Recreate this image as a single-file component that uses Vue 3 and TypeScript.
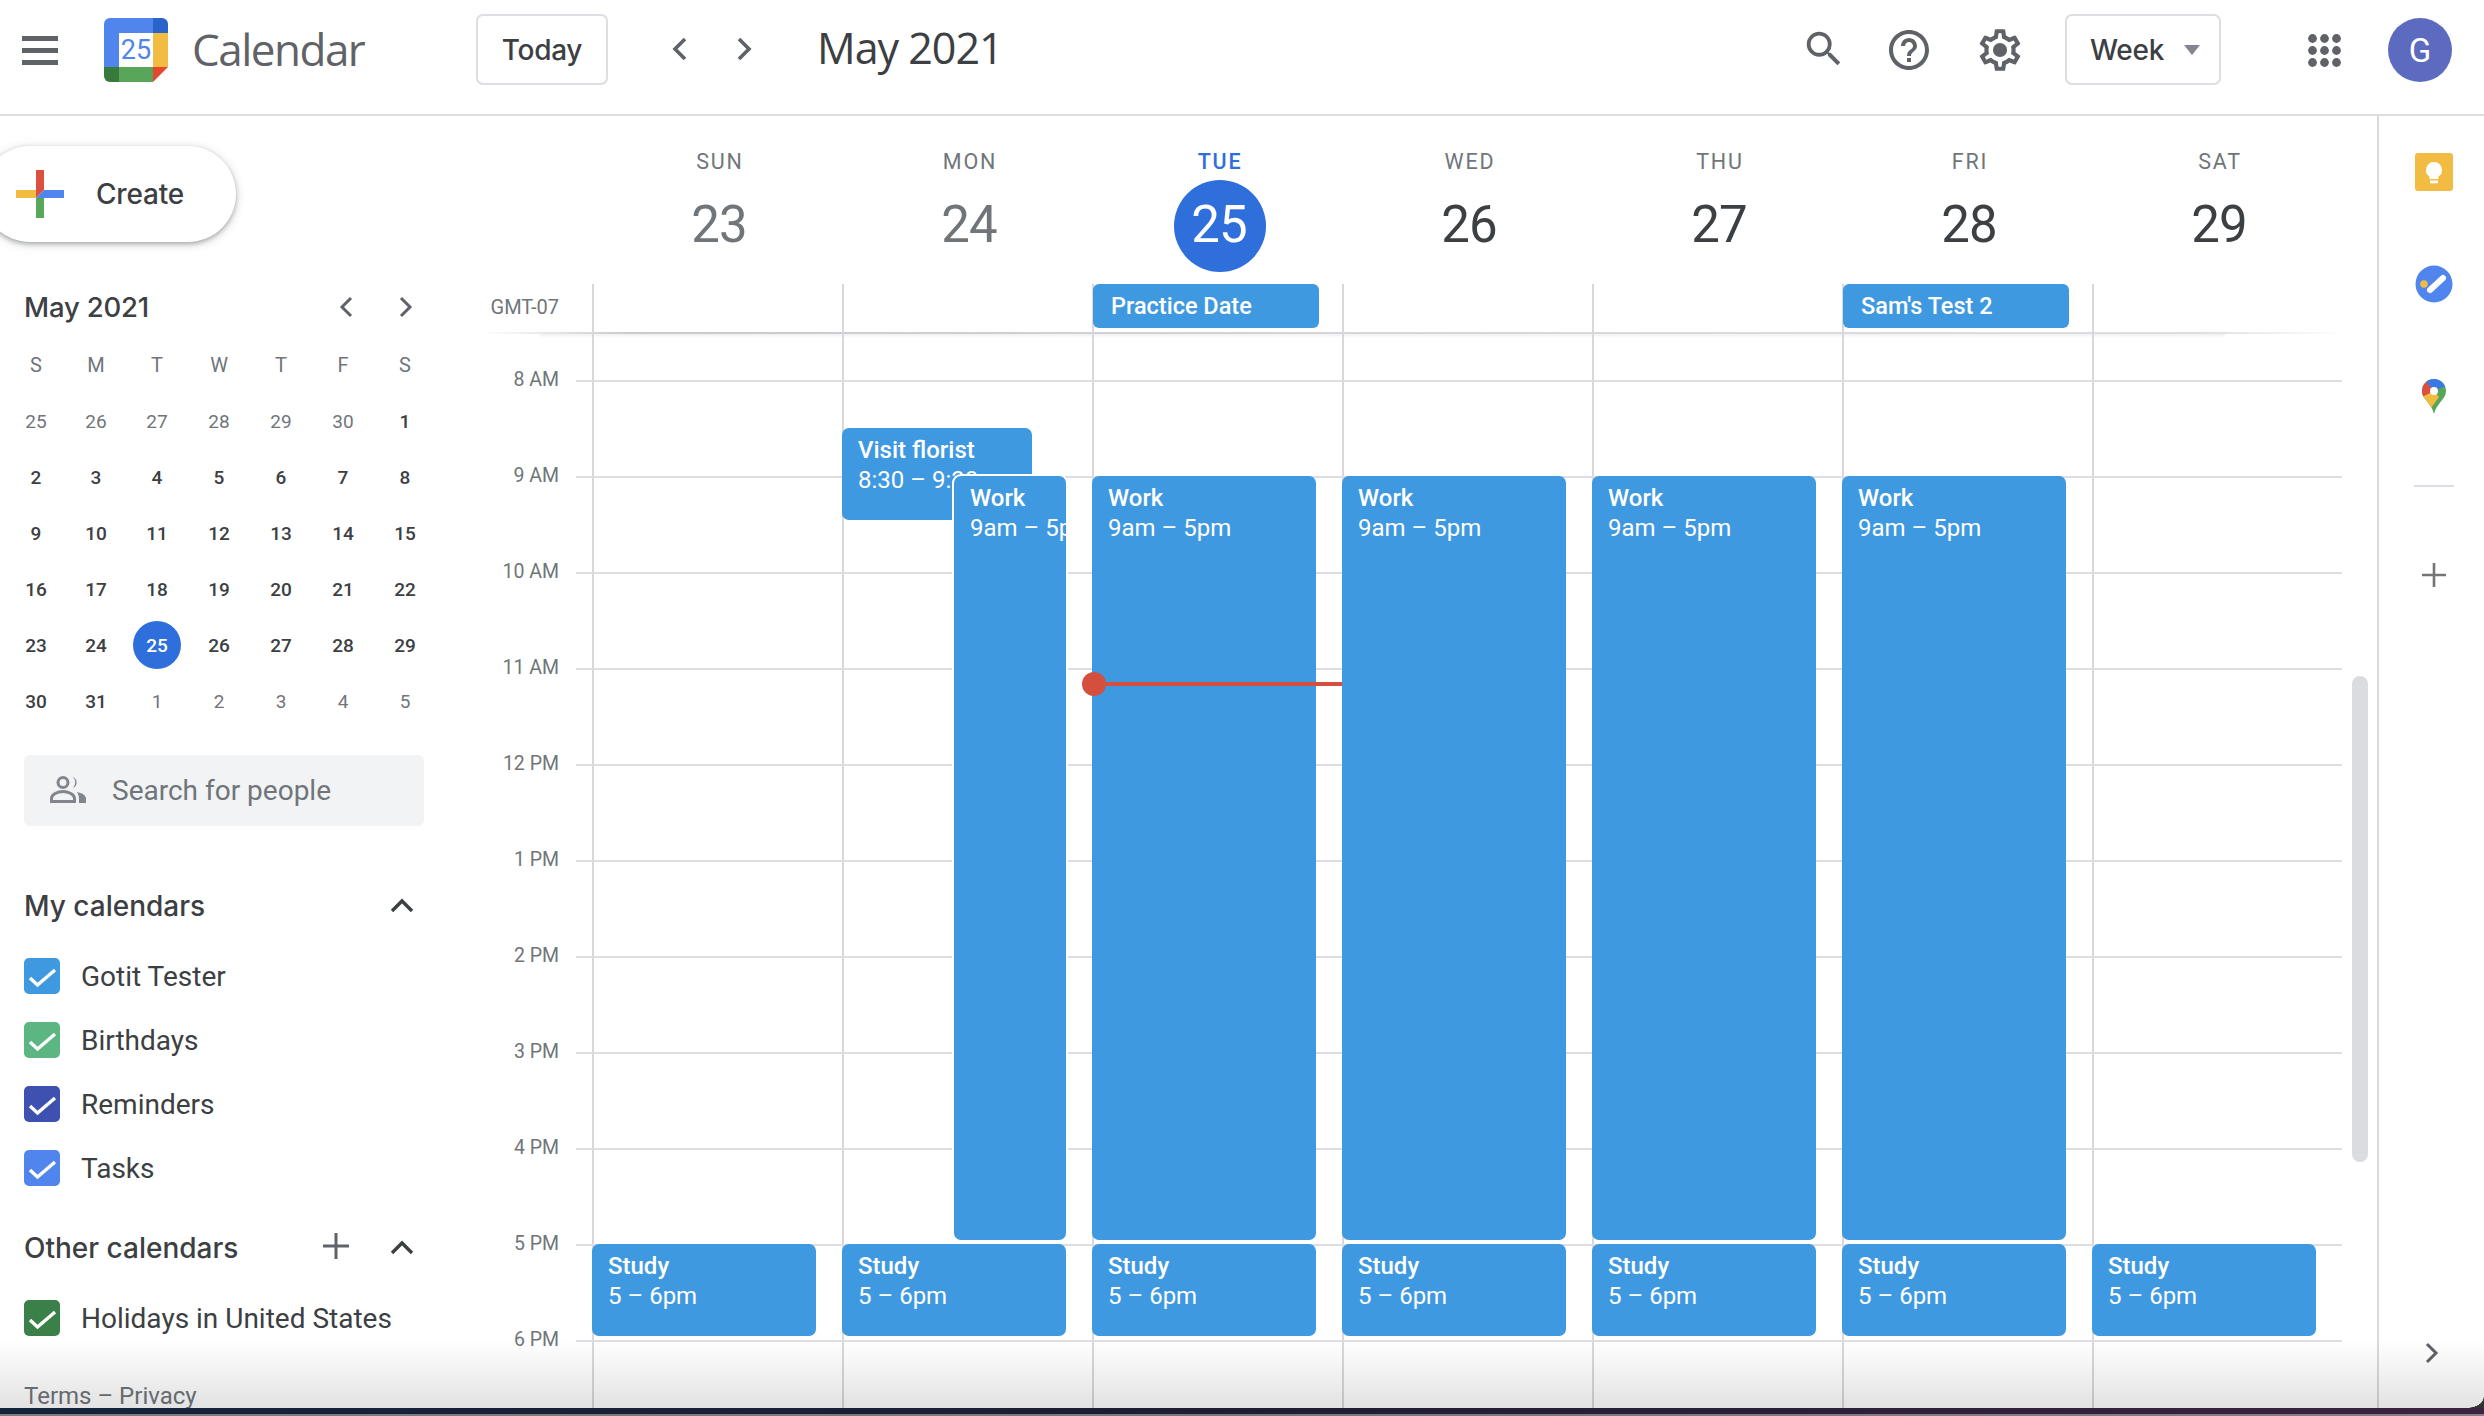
<script setup lang="ts">
interface Ev { title: string; time?: string; top: number; left: number; width: number; height: number; ring?: boolean }
interface Day { name: string; num: number; today?: boolean; past?: boolean; allDay?: string; events: Ev[]; now?: boolean }

const HOUR = 96
const FIRST = 47
const at = (h: number) => FIRST + (h - 8) * HOUR - 1
const work = (left = 0, width = 224, ring = false): Ev => ({ title: 'Work', time: '9am – 5pm', top: at(9), left, width, height: 764, ring })
const study = (): Ev => ({ title: 'Study', time: '5 – 6pm', top: at(17), left: 0, width: 224, height: 92 })

const days: Day[] = [
  { name: 'SUN', num: 23, past: true, events: [study()] },
  { name: 'MON', num: 24, past: true, events: [{ title: 'Visit florist', time: '8:30 – 9:30', top: at(8.5), left: 0, width: 190, height: 92 }, work(112, 112, true), study()] },
  { name: 'TUE', num: 25, today: true, allDay: 'Practice Date', now: true, events: [work(), study()] },
  { name: 'WED', num: 26, events: [work(), study()] },
  { name: 'THU', num: 27, events: [work(), study()] },
  { name: 'FRI', num: 28, allDay: "Sam's Test 2", events: [work(), study()] },
  { name: 'SAT', num: 29, events: [study()] },
]

const hours = ['8 AM', '9 AM', '10 AM', '11 AM', '12 PM', '1 PM', '2 PM', '3 PM', '4 PM', '5 PM', '6 PM', '']
const letters = ['S', 'M', 'T', 'W', 'T', 'F', 'S']
const mini = [
  [25, 26, 27, 28, 29, 30, 1], [2, 3, 4, 5, 6, 7, 8], [9, 10, 11, 12, 13, 14, 15],
  [16, 17, 18, 19, 20, 21, 22], [23, 24, 25, 26, 27, 28, 29], [30, 31, 1, 2, 3, 4, 5],
].flatMap((row, r) => row.map((d) => ({ d, muted: (r === 0 && d > 20) || (r === 5 && d < 10), today: r === 4 && d === 25 })))

const mine = [
  { name: 'Gotit Tester', color: '#3f99e0' },
  { name: 'Birthdays', color: '#5cb682' },
  { name: 'Reminders', color: '#3f51b0' },
  { name: 'Tasks', color: '#4f85ec' },
]
const dots = [0, 1, 2].flatMap((y) => [0, 1, 2].map((x) => ({ x: 4.5 + x * 12, y: 4.5 + y * 12 })))
</script>

<template>
  <div class="app">
    <header class="top">
      <svg class="menu" width="36" height="29" viewBox="0 0 36 29"><rect y="0" width="36" height="5" /><rect y="12" width="36" height="5" /><rect y="24" width="36" height="5" /></svg>
      <svg class="logo" width="64" height="64" viewBox="0 0 64 64">
        <path d="M6 0h44v15H15v34H0V6a6 6 0 0 1 6-6z" fill="#4f85ec" />
        <path d="M49 0h9a6 6 0 0 1 6 6v9H49z" fill="#2a64ca" />
        <rect x="49" y="15" width="15" height="34" fill="#f2bc42" />
        <path d="M0 49h15v15H6a6 6 0 0 1-6-6z" fill="#38793c" />
        <rect x="15" y="49" width="34" height="15" fill="#57a65a" />
        <path d="M49 49h15L49 64z" fill="#e5472f" />
        <rect x="15" y="15" width="34" height="34" fill="#fff" />
        <text x="32" y="41" text-anchor="middle" class="logo-num">25</text>
      </svg>
      <span class="brand">Calendar</span>
      <button class="btn today-btn">Today</button>
      <svg class="chev first" width="24" height="30" viewBox="0 0 24 30"><path d="M17 5 7 15l10 10" /></svg>
      <svg class="chev second" width="24" height="30" viewBox="0 0 24 30"><path d="M7 5l10 10L7 25" /></svg>
      <span class="title">May 2021</span>
      <span class="spacer"></span>
      <svg class="ic search" width="46" height="46" viewBox="0 0 24 24"><path d="M15.5 14h-.79l-.28-.27A6.47 6.47 0 0 0 16 9.5 6.5 6.5 0 1 0 9.5 16c1.61 0 3.09-.59 4.23-1.57l.27.28v.79l5 4.99L20.49 19l-4.99-5zm-6 0C7.01 14 5 11.99 5 9.5S7.01 5 9.5 5 14 7.01 14 9.5 11.99 14 9.5 14z" /></svg>
      <svg class="ic help" width="48" height="48" viewBox="0 0 24 24"><path d="M11 18h2v-2h-2v2zm1-16C6.48 2 2 6.48 2 12s4.48 10 10 10 10-4.48 10-10S17.52 2 12 2zm0 18c-4.41 0-8-3.59-8-8s3.59-8 8-8 8 3.59 8 8-3.59 8-8 8zm0-14c-2.21 0-4 1.79-4 4h2c0-1.1.9-2 2-2s2 .9 2 2c0 2-3 1.75-3 5h2c0-2.25 3-2.5 3-5 0-2.21-1.79-4-4-4z" /></svg>
      <svg class="ic gear" width="50" height="50" viewBox="0 0 24 24"><path d="M19.43 12.98c.04-.32.07-.64.07-.98 0-.34-.03-.66-.07-.98l2.11-1.65c.19-.15.24-.42.12-.64l-2-3.46c-.09-.16-.26-.25-.44-.25-.06 0-.12.01-.17.03l-2.49 1c-.52-.4-1.08-.73-1.69-.98l-.38-2.65C14.46 2.18 14.25 2 14 2h-4c-.25 0-.46.18-.49.42l-.38 2.65c-.61.25-1.17.59-1.69.98l-2.49-1c-.06-.02-.12-.03-.18-.03-.17 0-.34.09-.43.25l-2 3.46c-.13.22-.07.49.12.64l2.11 1.65c-.04.32-.07.65-.07.98 0 .33.03.66.07.98l-2.11 1.65c-.19.15-.24.42-.12.64l2 3.46c.09.16.26.25.44.25.06 0 .12-.01.17-.03l2.49-1c.52.4 1.08.73 1.69.98l.38 2.65c.03.24.24.42.49.42h4c.25 0 .46-.18.49-.42l.38-2.65c.61-.25 1.17-.59 1.69-.98l2.49 1c.06.02.12.03.18.03.17 0 .34-.09.43-.25l2-3.46c.12-.22.07-.49-.12-.64l-2.11-1.65zm-1.98-1.71c.04.31.05.52.05.73 0 .21-.02.43-.05.73l-.14 1.13.89.7 1.08.84-.7 1.21-1.27-.51-1.04-.42-.9.68c-.43.32-.84.56-1.25.73l-1.06.43-.16 1.13-.2 1.35h-1.4l-.19-1.35-.16-1.13-1.06-.43c-.43-.18-.83-.41-1.23-.71l-.91-.7-1.06.43-1.27.51-.7-1.21 1.08-.84.89-.7-.14-1.13c-.03-.31-.05-.54-.05-.74s.02-.43.05-.73l.14-1.13-.89-.7-1.08-.84.7-1.21 1.27.51 1.04.42.9-.68c.43-.32.84-.56 1.25-.73l1.06-.43.16-1.13.2-1.35h1.39l.19 1.35.16 1.13 1.06.43c.43.18.83.41 1.23.71l.91.7 1.06-.43 1.27-.51.7 1.21-1.07.85-.89.7.14 1.13z" /><circle cx="12" cy="12" r="3.4" /></svg>
      <button class="btn week-btn">Week<i class="caret"></i></button>
      <svg class="ic apps" width="33" height="33" viewBox="0 0 33 33"><circle v-for="(p, i) in dots" :key="i" :cx="p.x" :cy="p.y" r="4.4" /></svg>
      <span class="avatar">G</span>
    </header>

    <main class="body">
      <aside class="side">
        <button class="create">
          <svg width="48" height="48" viewBox="0 0 48 48">
            <polygon points="20,0 28,0 28,20 20,28" fill="#dc5040" />
            <polygon points="0,20 20,20 20,28 0,28" fill="#f2bc42" />
            <polygon points="28,20 48,20 48,28 20,28" fill="#4f85ec" />
            <polygon points="20,28 28,28 28,48 20,48" fill="#57a65a" />
          </svg>
          <span>Create</span>
        </button>

        <div class="mini-head">
          <span class="mini-title">May 2021</span>
          <svg class="mini-chev" width="18" height="24" viewBox="0 0 18 24"><path d="M14 3 5 12l9 9" /></svg>
          <svg class="mini-chev next" width="18" height="24" viewBox="0 0 18 24"><path d="M4 3l9 9-9 9" /></svg>
        </div>
        <div class="mini-grid">
          <span v-for="(l, i) in letters" :key="'l' + i" class="cell letter">{{ l }}</span>
          <span v-for="(c, i) in mini" :key="i" class="cell" :class="{ muted: c.muted, on: c.today }">{{ c.d }}</span>
        </div>

        <div class="people">
          <svg width="36" height="27" viewBox="0 0 36 27">
            <circle cx="13" cy="6.500" r="5" class="po" />
            <path d="M1.500 25.500v-3c0-4 6-7 11.500-7s11.500 3 11.500 7v3z" class="po" />
            <path d="M23 1a6 6 0 0 1 0 11 8 8 0 0 0 0-11z" />
            <path d="M27 16c4.500 1 9 3 9 6.500V27h-7v-4.500c0-2.500-1-4.500-2-6.500z" />
          </svg>
          <span>Search for people</span>
        </div>

        <div class="sec-head mine">
          <span class="sec-title">My calendars</span>
          <svg class="up" width="24" height="16" viewBox="0 0 24 16"><path d="M2 13 12 3l10 10" /></svg>
        </div>
        <div class="list">
          <div v-for="c in mine" :key="c.name" class="cal">
            <span class="box" :style="{ background: c.color }"><svg width="36" height="36" viewBox="0 0 36 36"><path d="M6 20 13.500 27 31 12" /></svg></span>
            <span>{{ c.name }}</span>
          </div>
        </div>

        <div class="sec-head other">
          <span class="sec-title">Other calendars</span>
          <svg class="add" width="28" height="28" viewBox="0 0 28 28"><path d="M14 1v26M1 14h26" /></svg>
          <svg class="up" width="24" height="16" viewBox="0 0 24 16"><path d="M2 13 12 3l10 10" /></svg>
        </div>
        <div class="list">
          <div class="cal">
            <span class="box holiday"><svg width="36" height="36" viewBox="0 0 36 36"><path d="M6 20 13.500 27 31 12" /></svg></span>
            <span>Holidays in United States</span>
          </div>
        </div>
        <div class="legal">Terms – Privacy</div>
      </aside>

      <section class="week">
        <div class="week-head">
          <div v-for="d in days" :key="d.name" class="dh" :class="{ today: d.today, past: d.past }">
            <span class="dn">{{ d.name }}</span>
            <span class="dd">{{ d.num }}</span>
          </div>
        </div>

        <div class="allday">
          <span class="gmt">GMT-07</span>
          <div class="ad-cols">
            <div v-for="d in days" :key="d.name" class="ad-col">
              <span v-if="d.allDay" class="ad-ev">{{ d.allDay }}</span>
            </div>
          </div>
        </div>

        <div class="grid">
          <div class="gutter">
            <div v-for="h in hours" :key="h" class="tick"><span>{{ h }}</span></div>
          </div>
          <div class="cols">
            <div v-for="d in days" :key="d.name" class="col">
              <div v-for="h in hours" :key="h" class="slot"></div>
              <div
                v-for="e in d.events"
                :key="e.title"
                class="ev"
                :class="{ ring: e.ring }"
                :style="{ top: e.top + 'px', left: e.left + 'px', width: e.width + 'px', height: e.height + 'px' }"
              >
                <b>{{ e.title }}</b>
                <span>{{ e.time }}</span>
              </div>
              <div v-if="d.now" class="now"><i></i></div>
            </div>
          </div>
          <div class="thumb"></div>
        </div>
      </section>

      <nav class="rail">
        <svg class="keep" width="38" height="38" viewBox="0 0 38 38">
          <rect width="38" height="38" rx="3" fill="#f2bc42" />
          <path d="M19 9a8 8 0 0 0-4.500 14.600V26h9v-2.400A8 8 0 0 0 19 9z" fill="#fff" />
          <rect x="15" y="27.500" width="8" height="2.800" fill="#fff" />
        </svg>
        <svg class="tasks" width="38" height="38" viewBox="0 0 38 38">
          <circle cx="19" cy="19" r="18.500" fill="#4f85ec" />
          <circle cx="9" cy="19" r="3.800" fill="#f2bc42" />
          <path d="M15 25 28 13" stroke="#fff" stroke-width="6" stroke-linecap="round" />
        </svg>
        <svg class="maps" width="24" height="35" viewBox="0 0 24 35">
          <defs>
            <clipPath id="pin"><path d="M12 0C5.400 0 0 5.300 0 12c0 8.500 9.500 12 12 23 2.500-11 12-14.500 12-23C24 5.300 18.600 0 12 0z" /></clipPath>
          </defs>
          <g clip-path="url(#pin)">
            <rect width="24" height="35" fill="#57a65a" />
            <polygon points="0,14 12,12 17,18 9,29 0,24" fill="#f2bc42" />
            <polygon points="0,0 8,0 12,12 0,18" fill="#d9503f" />
            <polygon points="5,0 24,0 24,7 12,12 5,4" fill="#3a78e4" />
          </g>
          <circle cx="12" cy="12" r="4" fill="#fff" />
        </svg>
        <span class="rail-div"></span>
        <svg class="rail-add" width="24" height="24" viewBox="0 0 24 24"><path d="M12 0v24M0 12h24" /></svg>
        <svg class="rail-chev" width="14" height="22" viewBox="0 0 14 22"><path d="M2 2l9 9-9 9" /></svg>
      </nav>
    </main>

    <div class="fade"></div>
    <div class="corner"></div>
    <div class="band"></div>
  </div>
</template>

<style>
html, body { margin: 0; background: #fff; overflow: hidden; }
</style>

<style scoped>
.app {
  position: relative;
  width: 2484px;
  height: 1416px;
  overflow: hidden;
  display: flex;
  flex-direction: column;
  background: #fff;
  color: #3c4043;
  font-family: Roboto, "Liberation Sans", sans-serif;
}
button { font: inherit; color: inherit; background: #fff; padding: 0; }

/* top bar */
.top {
  height: 116px;
  flex: none;
  box-sizing: border-box;
  border-bottom: 2px solid #dddde3;
  display: flex;
  align-items: flex-start;
}
.menu { margin: 36px 0 0 22px; fill: #5f6368; }
.logo { margin: 18px 0 0 46px; }
.logo-num { font: 400 27px Roboto, sans-serif; fill: #4f85ec; }
.brand { margin: 21px 0 0 24px; width: 284px; font: 400 44px/56px "Open Sans", sans-serif; color: #5f6368; letter-spacing: -1.500px; }
.btn { border: 2px solid #dddde3; border-radius: 7px; height: 71px; box-sizing: border-box; font: 500 28px Inter, sans-serif; letter-spacing: -.3px; color: #3c4043; }
.today-btn { width: 132px; margin-top: 14px; }
.chev { margin-top: 34px; fill: none; stroke: #5f6368; stroke-width: 3.600; }
.chev.first { margin-left: 60px; }
.chev.second { margin-left: 40px; }
.title { margin: 20px 0 0 61px; font: 400 43px/56px "Open Sans", sans-serif; letter-spacing: -1px; color: #3c4043; }
.spacer { flex: 1; }
.ic { fill: #5f6368; }
.search { margin-top: 26px; }
.help { margin: 26px 0 0 38px; }
.gear { margin: 25px 0 0 42px; }
.week-btn { margin: 14px 0 0 40px; width: 156px; display: flex; align-items: center; padding-left: 23px; }
.caret { margin-left: 20px; border: 8.500px solid transparent; border-top: 10px solid #80868b; border-bottom: 0; }
.apps { margin: 34px 0 0 87px; }
.avatar {
  margin: 18px 32px 0 47px;
  width: 64px; height: 64px; border-radius: 50%;
  background: #5c6bc0; color: #fff;
  display: flex; align-items: center; justify-content: center;
  font: 400 33px Roboto, sans-serif;
}

.body { flex: 1; display: flex; min-height: 0; }

/* left side */
.side { width: 480px; flex: none; padding-left: 24px; box-sizing: border-box; }
.create {
  margin: 30px 0 0 -42px;
  width: 254px; height: 96px;
  border: 0; border-radius: 48px;
  display: flex; align-items: center;
  padding-left: 34px;
  box-shadow: 0 2px 4px rgba(60,64,67,.35), 0 2px 8px 2px rgba(60,64,67,.15);
  font: 500 28px Inter, sans-serif;
  letter-spacing: -.2px;
  color: #3c4043;
}
.create span { margin-left: 32px; }
.mini-head { display: flex; align-items: center; height: 40px; margin-top: 45px; }
.mini-title { font: 500 27.500px Inter, sans-serif; letter-spacing: -.2px; color: #3c4043; width: 313px; }
.mini-chev { fill: none; stroke: #5f6368; stroke-width: 3; }
.mini-chev.next { margin-left: 42px; }
.mini-grid {
  margin: 10px 0 0 -19px;
  display: grid;
  grid-template-columns: 62px 58px 64px 60px 64px 60px 64px;
  grid-auto-rows: 56px;
  width: 432px;
}
.cell {
  display: flex; align-items: center; justify-content: center;
  position: relative; z-index: 0;
  font: 500 19px Roboto, sans-serif;
  color: #3c4043;
}
.letter, .muted { color: #70757a; font-weight: 400; }
.letter { font-size: 20px; }
.on { color: #fff; }
.on::before {
  content: ""; position: absolute; z-index: -1;
  left: 8px; top: 4px; width: 48px; height: 48px;
  border-radius: 50%; background: #2e6fdc;
}
.people {
  margin-top: 26px; width: 400px; height: 71px;
  background: #f1f3f4; border-radius: 6px;
  display: flex; align-items: center;
  padding-left: 26px; box-sizing: border-box;
  font: 400 28px Roboto, sans-serif; color: #70757a;
}
.people svg { fill: #80868b; margin-right: 26px; margin-top: -2px; overflow: visible; }
.people .po { fill: none; stroke: #80868b; stroke-width: 3; }
.sec-head { height: 40px; display: flex; align-items: center; position: relative; }
.sec-head.mine { margin-top: 60px; }
.sec-head.other { margin-top: 28px; }
.sec-title { font: 500 28px Inter, sans-serif; color: #3c4043; }
.up { position: absolute; left: 366px; top: 12px; fill: none; stroke: #3c4043; stroke-width: 3.400; }
.add { position: absolute; left: 298px; top: 4px; fill: none; stroke: #5f6368; stroke-width: 3; }
.list { margin-top: 18px; }
.cal { height: 64px; display: flex; align-items: center; font: 400 28px Roboto, sans-serif; color: #3c4043; }
.box { width: 36px; height: 36px; border-radius: 5px; margin-right: 21px; display: block; }
.box.holiday { background: #3b8049; }
.box svg { display: block; fill: none; stroke: #fff; stroke-width: 3.400; }
.legal { margin-top: 34px; font: 400 24px/24px Roboto, sans-serif; color: #70757a; }

/* week */
.week { flex: none; width: 1897px; border-right: 2px solid #d8d8de; display: flex; flex-direction: column; min-height: 0; }
.week-head { display: grid; grid-template-columns: repeat(7, 250px); height: 168px; margin-left: 115px; }
.dh { display: flex; flex-direction: column; align-items: center; position: relative; color: #3c4043; }
.dn { margin-top: 34px; height: 24px; font: 400 21.500px/24px Roboto, sans-serif; letter-spacing: 1.800px; color: #70757a; }
.dd {
  margin-top: 6px; width: 92px; height: 92px; border-radius: 50%;
  display: flex; align-items: center; justify-content: center;
  box-sizing: border-box; padding: 0 2px 4px 0;
  font: 400 51px Roboto, sans-serif; letter-spacing: -1px;
}
.past .dd { color: #70757a; }
.today .dn { color: #2e6fdc; font-weight: 500; }
.today .dd { background: #2e6fdc; color: #fff; }

.allday {
  height: 50px; flex: none; display: flex; position: relative;
  background: linear-gradient(90deg, rgba(0,0,0,0), #c9cacd 8%, #d8d9dc 60%, #dddee1 92%, rgba(0,0,0,0)) 0 48px / 100% 2px no-repeat;
  margin-right: 32px;
}
.allday::after { content: ""; position: absolute; left: 60px; right: 120px; top: 50px; height: 4px; background: linear-gradient(rgba(0,0,0,.06), transparent); }
.gmt { width: 79px; text-align: right; font: 400 20px/46px Roboto, sans-serif; color: #70757a; flex: none; margin-right: 33px; }
.ad-cols { display: grid; grid-template-columns: repeat(7, 250px); }
.ad-col { box-shadow: inset 2px 0 0 #d8d8dc; }
.ad-ev {
  display: block; width: 226px; height: 44px; box-sizing: border-box;
  border-radius: 6px; background: #3f99e0; color: #fff;
  margin-left: 1px; padding-left: 18px;
  font: 500 23.500px/44px Roboto, sans-serif;
}

.grid { flex: 1; display: flex; position: relative; min-height: 0; overflow: hidden; }
.gutter { width: 112px; flex: none; padding-top: 46px; }
.tick { height: 96px; box-sizing: border-box; position: relative; text-align: right; padding-right: 33px; font: 400 19.500px/24px Roboto, sans-serif; color: #70757a; }
.tick span { display: block; transform: translateY(-12px); }
.tick::after { content: ""; position: absolute; right: 0; top: 0; width: 16px; height: 2px; background: #dddde3; }
.cols { display: grid; grid-template-columns: repeat(7, 250px); }
.col { position: relative; box-shadow: inset 2px 0 0 #d8d8dc; padding-top: 46px; }
.slot { height: 96px; box-sizing: border-box; border-top: 2px solid #dddde3; }
.ev {
  position: absolute; box-sizing: border-box;
  background: #3f99e0; color: #fff; border-radius: 7px;
  padding: 7px 0 0 16px; overflow: hidden;
  display: flex; flex-direction: column;
  font-size: 24px; line-height: 30px; white-space: nowrap;
}
.ev b { font-weight: 500; }
.ev.ring { box-shadow: 0 0 0 2px #fff; }
.now { position: absolute; left: 1px; right: 0; top: 348px; height: 4px; background: #d54f3f; }
.now i { position: absolute; left: -11px; top: -10px; width: 24px; height: 24px; border-radius: 50%; background: #d54f3f; }
.thumb { position: absolute; left: 1872px; top: 342px; width: 16px; height: 486px; border-radius: 8px; background: #dadce0; }

/* right rail */
.rail { flex: 1; display: flex; flex-direction: column; align-items: center; position: relative; padding-left: 5px; width: 105px; box-sizing: border-box; }
.keep { margin-top: 37px; flex: none; }
.tasks { margin-top: 74px; flex: none; }
.maps { margin-top: 76px; flex: none; }
.rail-div { margin-top: 71px; width: 40px; height: 2px; background: #dddde3; flex: none; }
.rail-add { margin-top: 76px; flex: none; fill: none; stroke: #757575; stroke-width: 2.600; }
.rail-chev { margin-top: 755px; flex: none; margin-right: 4px; fill: none; stroke: #5f6368; stroke-width: 3; }

/* photographed window edge */
.fade { position: absolute; left: 0; right: 0; top: 1340px; height: 68px; background: linear-gradient(rgba(0,0,0,0), rgba(0,0,0,.115)); pointer-events: none; }
.corner { position: absolute; right: 0; top: 1397px; width: 17px; height: 11px; background: radial-gradient(ellipse 17px 11px at 0 0, transparent 96%, #333 100%); }
.band {
  position: absolute; left: 0; right: 0; top: 1408px; height: 8px;
  background:
    linear-gradient(90deg, #7b7b80, #78787f 50%, #8a7a8c) 0 6px / 100% 2px no-repeat,
    linear-gradient(90deg, #14233c, #1e1d33 50%, #3c2340);
}
</style>
